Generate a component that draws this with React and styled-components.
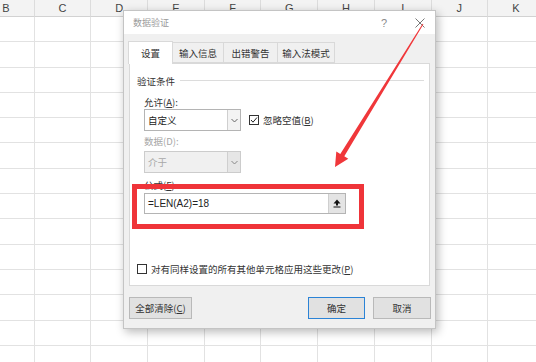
import styled, { createGlobalStyle } from 'styled-components';

const GlobalStyle = createGlobalStyle`
    html, body {
        margin: 0;
        padding: 0;
        background: #ffffff;
        overflow: hidden;
    }
    body {
        font-family: "Noto Sans CJK SC", "Noto Sans", sans-serif;
    }
`;

const COLUMNS = ['B', 'C', 'D', 'E', 'F', 'G', 'H', 'I', 'J', 'K'];
const ROW_COUNT = 14;

// Styled Components
const Page = styled.div`
    position: relative;
    width: 536px;
    height: 362px;
    overflow: hidden;
`;

const Sheet = styled.div`
    display: grid;
    grid-template-columns: repeat(10, 56.7px);
    grid-template-rows: 17px;
    grid-auto-rows: 25.3px;
    margin-left: -22px;
`;

const HeadCell = styled.div`
    display: flex;
    align-items: center;
    justify-content: center;
    background: #f3f3f3;
    border-right: 1px solid #dcdcdc;
    border-bottom: 1px solid #d2d2d2;
    font-family: "Liberation Sans", sans-serif;
    font-size: 11px;
    color: #444;
    box-sizing: border-box;
`;

const Cell = styled.div`
    border-right: 1px solid #e2e2e2;
    border-bottom: 1px solid #e2e2e2;
    box-sizing: border-box;
`;

const Dialog = styled.div`
    position: absolute;
    left: 123px;
    top: 10px;
    width: 313px;
    display: flex;
    flex-direction: column;
    background: #f0f0f0;
    border: 1px solid #c4c4c4;
    box-sizing: border-box;
    box-shadow: 2px 3px 9px rgba(0, 0, 0, 0.28);
    font-size: 9.5px;
    color: #333;
`;

const TitleBar = styled.div`
    height: 23px;
    display: flex;
    align-items: center;
    padding: 0 10px 0 9px;
    background: #ffffff;
`;

const TitleText = styled.div`
    flex: 1;
    font-size: 9px;
    color: #9a9a9a;
`;

const Help = styled.div`
    font-family: "Liberation Sans", sans-serif;
    font-size: 11px;
    color: #8a8a8a;
    margin-right: 28px;
`;

const Body = styled.div`
    display: flex;
    flex-direction: column;
    padding: 7px 5px 0 4px;
`;

const Tabs = styled.div`
    display: flex;
    align-items: flex-end;
    height: 22px;
`;

const Tab = styled.div`
    width: ${(p) => p.$w}px;
    height: ${(p) => (p.$active ? 23 : 21)}px;
    display: flex;
    align-items: center;
    justify-content: center;
    box-sizing: border-box;
    background: ${(p) => (p.$active ? '#ffffff' : '#f0f0f0')};
    border: 1px solid #d9d9d9;
    border-bottom: ${(p) => (p.$active ? 'none' : '1px solid #d9d9d9')};
    border-left: ${(p) => (p.$first ? '1px solid #d9d9d9' : 'none')};
    margin-bottom: ${(p) => (p.$active ? -1 : 0)}px;
    position: relative;
    z-index: ${(p) => (p.$active ? 2 : 1)};
    color: #333;
`;

const Panel = styled.div`
    position: relative;
    height: 223px;
    margin-left: 1px;
    display: flex;
    flex-direction: column;
    background: #ffffff;
    border: 1px solid #d9d9d9;
    box-sizing: border-box;
    padding-bottom: 9px;
`;

const GroupHead = styled.div`
    height: 33px;
    display: flex;
    align-items: center;
    gap: 5px;
    padding: 0 5px 0 7px;

    &::after {
        content: '';
        flex: 1;
        height: 1px;
        background: #dcdcdc;
    }
`;

const Fields = styled.div`
    display: flex;
    flex-direction: column;
    padding-left: 14px;
`;

const Label = styled.div`
    height: 12px;
    line-height: 12px;
    margin-top: ${(p) => p.$mt || 0}px;
    color: ${(p) => (p.$disabled ? '#a6a6a6' : '#333')};
`;

const Row = styled.div`
    display: flex;
    align-items: center;
    gap: ${(p) => p.$gap ?? 8}px;
    margin-top: ${(p) => p.$mt || 0}px;
`;

const Select = styled.div`
    width: 97px;
    height: 22px;
    display: flex;
    box-sizing: border-box;
    border: 1px solid ${(p) => (p.$disabled ? '#cccccc' : '#b4b4b4')};
    background: ${(p) => (p.$disabled ? '#f0f0f0' : '#ffffff')};
    color: ${(p) => (p.$disabled ? '#a8a8a8' : '#222')};
`;

const SelectValue = styled.div`
    flex: 1;
    display: flex;
    align-items: center;
    padding-left: 3px;
`;

const SelectArrow = styled.div`
    width: 12px;
    display: flex;
    align-items: center;
    justify-content: center;
    border-left: 1px solid #cfcfcf;
    background: ${(p) => (p.$disabled ? '#e6e6e6' : '#f3f3f3')};
`;

const Check = styled.div`
    width: 10px;
    height: 10px;
    box-sizing: border-box;
    border: 1px solid #333;
    background: #fff;
    display: flex;
    align-items: center;
    justify-content: center;
`;

const CheckRow = styled.div`
    display: flex;
    align-items: center;
    gap: 4px;
    margin-top: auto;
    padding-left: 7px;
`;

const Formula = styled.div`
    width: 202px;
    height: 21px;
    margin-top: 2px;
    display: flex;
    box-sizing: border-box;
    border: 1px solid #b4b4b4;
    background: #ffffff;
`;

const FormulaText = styled.div`
    flex: 1;
    display: flex;
    align-items: center;
    padding-left: 3px;
    font-family: "Liberation Sans", sans-serif;
    font-size: 10px;
    color: #222;
`;

const PickButton = styled.div`
    width: 16px;
    display: flex;
    align-items: center;
    justify-content: center;
    background: #e4e4e4;
    border-left: 1px solid #cfcfcf;
`;

const Highlight = styled.div`
    position: absolute;
    left: 2px;
    top: 120px;
    width: 232px;
    height: 45px;
    box-sizing: border-box;
    border: 5px solid #ef3439;
    pointer-events: none;
`;

const Footer = styled.div`
    display: flex;
    align-items: center;
    gap: 8px;
    padding: 11px 4px 9px 5px;
`;

const Button = styled.div`
    width: ${(p) => p.$w}px;
    height: 22px;
    display: flex;
    align-items: center;
    justify-content: center;
    box-sizing: border-box;
    background: #e1e1e1;
    border: ${(p) => (p.$primary ? '1.5px solid #2b83d6' : '1px solid #b9b9b9')};
    margin-left: ${(p) => (p.$push ? 'auto' : '0')};
    color: #333;
`;

const Overlay = styled.svg`
    position: absolute;
    left: 0;
    top: 0;
    pointer-events: none;
`;

const Accel = styled.span`
    text-decoration: underline;
`;

function Chevron({ color = '#666' }) {
    return (
        <svg width="7" height="5" viewBox="0 0 7 5">
            <path d="M0.5 1 L3.5 4 L6.5 1" fill="none" stroke={color} strokeWidth="1" />
        </svg>
    );
}

export default function App() {
    const cells = [];
    for (let r = 0; r < ROW_COUNT; r++) {
        COLUMNS.forEach((c) => cells.push(<Cell key={`${c}${r}`} />));
    }

    return (
        <Page>
            <GlobalStyle />

            {/* Spreadsheet behind the dialog */}
            <Sheet>
                {COLUMNS.map((c) => (
                    <HeadCell key={c}>{c}</HeadCell>
                ))}
                {cells}
            </Sheet>

            <Dialog>
                <TitleBar>
                    <TitleText>数据验证</TitleText>
                    <Help>?</Help>
                    <svg width="10" height="10" viewBox="0 0 10 10">
                        <path d="M0.5 0.5 L9.5 9.5 M9.5 0.5 L0.5 9.5" stroke="#777" strokeWidth="1" />
                    </svg>
                </TitleBar>

                <Body>
                    <Tabs>
                        <Tab $w={45} $active $first>设置</Tab>
                        <Tab $w={51}>输入信息</Tab>
                        <Tab $w={54}>出错警告</Tab>
                        <Tab $w={57}>输入法模式</Tab>
                    </Tabs>

                    <Panel>
                        <GroupHead>验证条件</GroupHead>
                        <Fields>
                            <Label $mt={-1}>允许(<Accel>A</Accel>):</Label>
                            <Row $mt={1}>
                                <Select>
                                    <SelectValue>自定义</SelectValue>
                                    <SelectArrow><Chevron /></SelectArrow>
                                </Select>
                                <Row $gap={4}>
                                    <Check>
                                        <svg width="8" height="8" viewBox="0 0 8 8">
                                            <path d="M1 4 L3 6.2 L7 1.5" fill="none" stroke="#222" strokeWidth="1" />
                                        </svg>
                                    </Check>
                                    <span>忽略空值(<Accel>B</Accel>)</span>
                                </Row>
                            </Row>

                            <Label $mt={4} $disabled>数据(D):</Label>
                            <Row $mt={4}>
                                <Select $disabled>
                                    <SelectValue>介于</SelectValue>
                                    <SelectArrow $disabled><Chevron color="#888" /></SelectArrow>
                                </Select>
                            </Row>

                            <Label $mt={6}>公式(<Accel>F</Accel>)</Label>
                            <Formula>
                                <FormulaText>=LEN(A2)=18</FormulaText>
                                <PickButton>
                                    <svg width="8" height="9" viewBox="0 0 8 9">
                                        <path d="M4 0.5 L7.5 4.5 L5 4.5 L5 6.5 L3 6.5 L3 4.5 L0.5 4.5 Z" fill="#111" />
                                        <rect x="0.5" y="7.5" width="7" height="1" fill="#111" />
                                    </svg>
                                </PickButton>
                            </Formula>
                        </Fields>

                        <CheckRow>
                            <Check />
                            <span>对有同样设置的所有其他单元格应用这些更改(<Accel>P</Accel>)</span>
                        </CheckRow>

                        <Highlight />
                    </Panel>
                </Body>

                <Footer>
                    <Button $w={63}>全部清除(<Accel>C</Accel>)</Button>
                    <Button $w={57} $primary $push>确定</Button>
                    <Button $w={58}>取消</Button>
                </Footer>
            </Dialog>

            {/* Red annotation arrow */}
            <Overlay width="536" height="362" viewBox="0 0 536 362">
                <polygon
                    points="422.6,23.7 423.4,24.3 344.3,156.3 348.3,158.8 335,167 336.3,151.4 340.3,153.9"
                    fill="#f0373a"
                />
            </Overlay>
        </Page>
    );
}
